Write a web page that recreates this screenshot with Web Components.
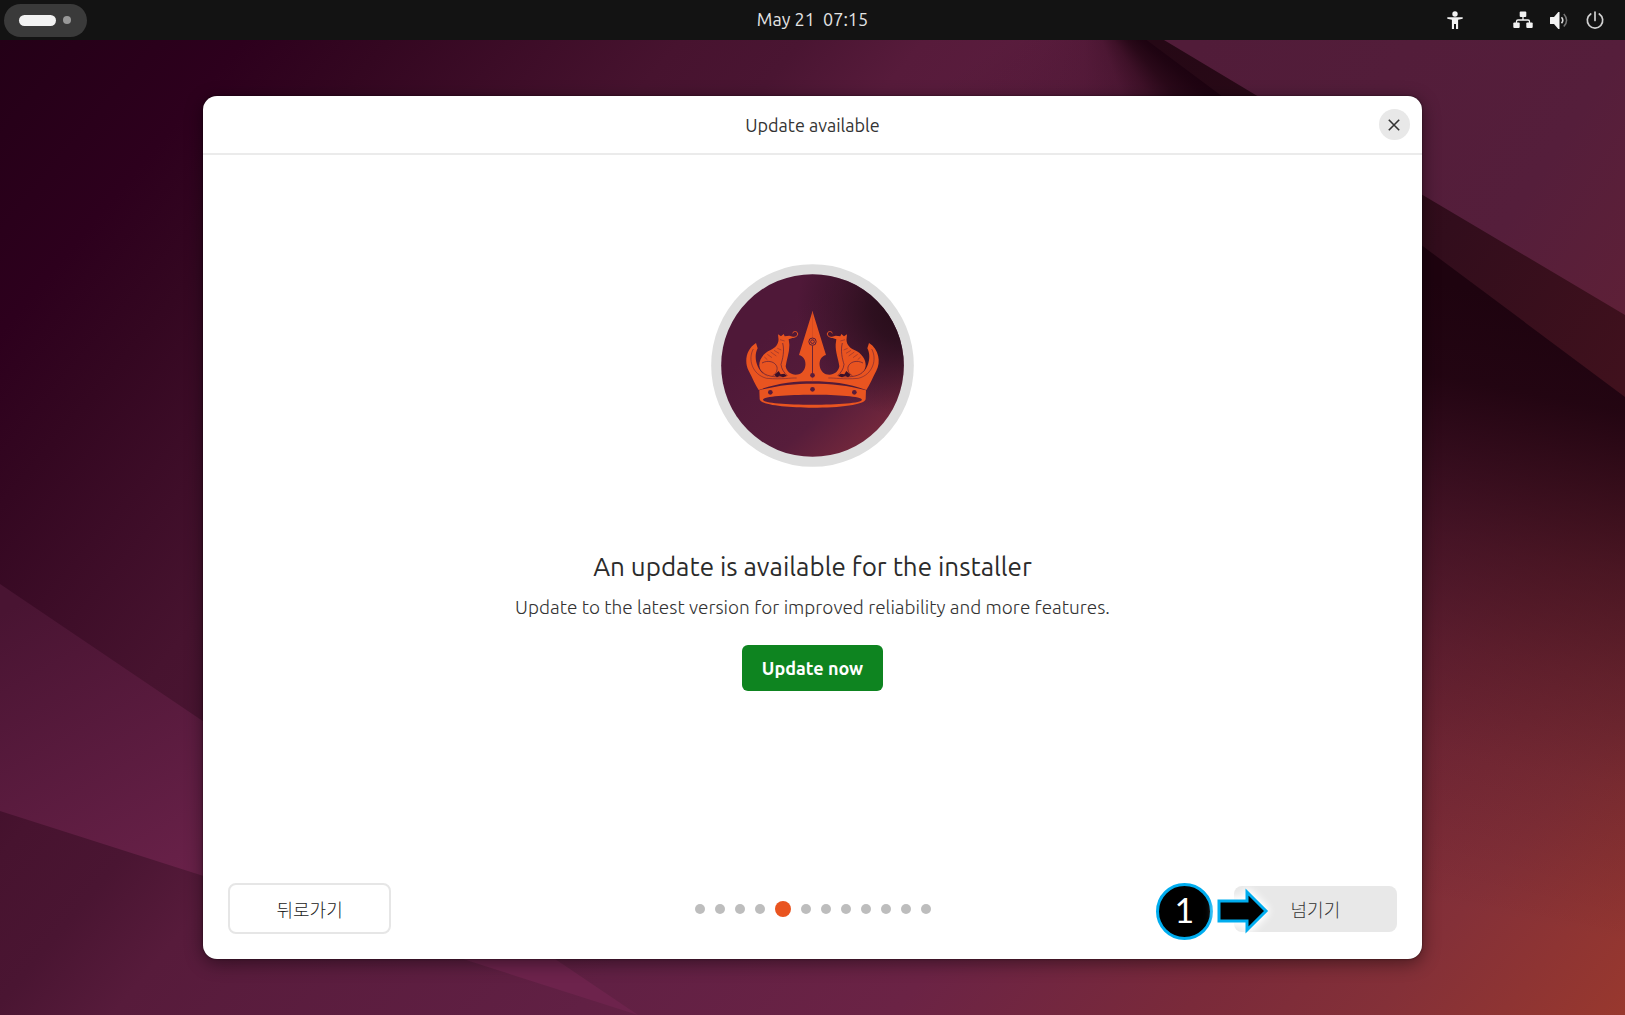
<!DOCTYPE html>
<html lang="ko">
<head>
<meta charset="utf-8">
<meta name="viewport" content="width=device-width, initial-scale=1">
<title>Update available</title>
<style>
  body {
    margin: 0;
    font-family: Ubuntu, "Noto Sans", "Noto Sans CJK KR", sans-serif;
    font-size: 18px;
    color: #333;
  }
</style>
</head>
<body>
<desktop-screen>
  <top-bar slot="bar">May 21 &nbsp;07:15</top-bar>
  <installer-window heading="Update available">
    <installer-logo></installer-logo>
    <update-notice>
      <span slot="title">An update is available for the installer</span>
      <span slot="text">Update to the latest version for improved reliability and more features.</span>
      <span slot="action">Update now</span>
    </update-notice>
    <nav-button slot="back">뒤로가기</nav-button>
    <step-dots slot="steps" count="12" current="5"></step-dots>
    <nav-button slot="next" filled>넘기기</nav-button>
    <step-marker slot="marker">1</step-marker>
  </installer-window>
</desktop-screen>

<script>
// Attach an open shadow root filled with the given HTML
function render(element, html) {
  const template = document.createElement("template");
  template.innerHTML = html;
  element.attachShadow({ mode: "open" });
  element.shadowRoot.appendChild(template.content.cloneNode(true));
}

// The wallpaper, with the bar on top and the window in the middle
class DesktopScreen extends HTMLElement {
  connectedCallback() {
    render(this, /*html*/`
      <style>
        :host {
          display: flex;
          flex-direction: column;
          position: relative;
          min-height: 100vh;
          overflow: hidden;
        }
        .wallpaper {
          position: absolute;
          inset: 0;
          width: 100%;
          height: 100%;
          z-index: -1;
        }
        .fan {
          height: 100%;
          background: conic-gradient(at 1085px -6px,
            transparent 125deg, #1c0210 125deg, #1d0310f5 130deg, #1e0410d0 138deg,
            #20041080 148deg, #20041040 160deg, #20041020 180deg, #20041000 240deg);
        }
        main {
          flex: 1;
          display: flex;
          justify-content: center;
          padding: 56px 0;
        }
        ::slotted(installer-window) { width: 75%; }
      </style>
      <svg class="wallpaper" viewBox="0 0 1625 1015" preserveAspectRatio="xMidYMid slice" aria-hidden="true">
        <defs>
          <linearGradient id="base" gradientUnits="userSpaceOnUse" x1="0" y1="40" x2="1436" y2="1237">
            <stop offset="0" stop-color="#240017"/>
            <stop offset=".1" stop-color="#2d001d"/>
            <stop offset=".16" stop-color="#340721"/>
            <stop offset=".28" stop-color="#47132f"/>
            <stop offset=".33" stop-color="#4a1532"/>
            <stop offset=".38" stop-color="#571b3b"/>
            <stop offset=".57" stop-color="#612044"/>
            <stop offset=".7" stop-color="#6b2345"/>
            <stop offset=".82" stop-color="#7a2a3a"/>
            <stop offset=".9" stop-color="#843038"/>
            <stop offset="1" stop-color="#98382e"/>
          </linearGradient>
          <linearGradient id="wedge" gradientUnits="userSpaceOnUse" x1="60" y1="580" x2="240" y2="900">
            <stop offset="0" stop-color="#491432"/>
            <stop offset="1" stop-color="#6d234c"/>
          </linearGradient>
          <linearGradient id="plane" gradientUnits="userSpaceOnUse" x1="1200" y1="40" x2="1625" y2="320">
            <stop offset="0" stop-color="#511c39"/>
            <stop offset=".7" stop-color="#551e3b"/>
            <stop offset="1" stop-color="#5e2037"/>
          </linearGradient>
          <linearGradient id="band" gradientUnits="userSpaceOnUse" x1="1160" y1="40" x2="1625" y2="380">
            <stop offset="0" stop-color="#250815"/>
            <stop offset=".6" stop-color="#320d1c"/>
            <stop offset="1" stop-color="#40111d"/>
          </linearGradient>
          <linearGradient id="shade" gradientUnits="userSpaceOnUse" x1="1530" y1="300" x2="1410" y2="900">
            <stop offset="0" stop-color="#1e030f"/>
            <stop offset=".15" stop-color="#1e030f" stop-opacity=".94"/>
            <stop offset=".25" stop-color="#1e030f" stop-opacity=".78"/>
            <stop offset=".41" stop-color="#1e030f" stop-opacity=".53"/>
            <stop offset=".58" stop-color="#1e030f" stop-opacity=".32"/>
            <stop offset=".75" stop-color="#1e030f" stop-opacity=".15"/>
            <stop offset="1" stop-color="#1e030f" stop-opacity="0"/>
          </linearGradient>
        </defs>
        <rect width="1625" height="1015" fill="url(#base)"/>
        <polygon points="0,584 638,1015 0,811" fill="url(#wedge)"/>
        <foreignObject width="1325" height="400"><div class="fan"></div></foreignObject>
        <rect x="1325" width="300" height="1015" fill="url(#shade)"/>
        <polygon points="1093,0 1625,397 1625,0" fill="url(#band)"/>
        <polygon points="1097,0 1164,40 1421,194 1625,315 1625,0" fill="url(#plane)"/>
      </svg>
      <slot name="bar"></slot>
      <main><slot></slot></main>`);
  }
}

// Panel with the workspace pill, the clock and the status icons
class TopBar extends HTMLElement {
  connectedCallback() {
    render(this, /*html*/`
      <style>
        :host {
          display: grid;
          grid-template-columns: 1fr auto 1fr;
          align-items: center;
          height: 40px;
          background: #131313;
          color: #e4e4e4;
        }
        button {
          border: 0;
          padding: 0;
          background: none;
          color: inherit;
        }
        .pill {
          display: flex;
          align-items: center;
          gap: 7px;
          width: 83px;
          height: 33px;
          margin-left: 4px;
          padding-left: 15px;
          border-radius: 17px;
          background: #3a3a3a;
        }
        .pill i {
          width: 8px;
          height: 8px;
          border-radius: 50%;
          background: #999;
        }
        .pill i:first-child {
          width: 37px;
          height: 11px;
          border-radius: 6px;
          background: #f2f2f2;
        }
        .icons {
          display: flex;
          justify-content: flex-end;
          gap: 16px;
          padding-right: 20px;
        }
        .icons button:first-child { margin-right: 32px; }
        time { line-height: 24px; padding-bottom: 2px; }
        svg { display: block; width: 20px; height: 20px; }
      </style>
      <button class="pill" aria-label="Activities"><i></i><i></i></button>
      <time><slot></slot></time>
      <div class="icons">
        <button aria-label="Accessibility">
          <svg viewBox="0 0 20 20" fill="#f2f2f2">
            <circle cx="10" cy="4" r="2.7"/>
            <path d="M2.3 7.2h15.4v1.6l-4.6 1V19h-2.1v-5H9v5H6.900V9.800l-4.600-1z"/>
          </svg>
        </button>
        <button aria-label="Network">
          <svg viewBox="0 0 20 20" fill="#f2f2f2">
            <rect x="6.700" y="1.500" width="6.600" height="5.500" rx="1"/>
            <rect x=".3" y="12.500" width="6.400" height="5.500" rx="1"/>
            <rect x="13.300" y="12.500" width="6.400" height="5.500" rx="1"/>
            <path d="M10 6v4M3.500 13v-1.500q0-1.500 1.500-1.500h10q1.500 0 1.500 1.500V13" fill="none" stroke="#f2f2f2" stroke-width="1.300"/>
          </svg>
        </button>
        <button aria-label="Volume">
          <svg viewBox="0 0 20 20">
            <path d="M1.500 7H5l4.300-5h1.200v17H9.300L5 14H1.500Q1 14 1 13.500v-6Q1 7 1.500 7z" fill="#f2f2f2"/>
            <path d="M12.500 7.200q2.600 3 0 6" fill="none" stroke="#ddd" stroke-width="1.600"/>
            <path d="M14.800 4q5.600 6.200 0 12.600" fill="none" stroke="#777" stroke-width="1.500"/>
          </svg>
        </button>
        <button aria-label="Power">
          <svg viewBox="0 0 20 20" fill="none" stroke="#d0d0d0" stroke-width="1.700" stroke-linecap="round">
            <path d="M10 2v8.500M5.700 4a7.700 7.700 0 1 0 8.600 0"/>
          </svg>
        </button>
      </div>`);
  }
}

// White window: header, content and a footer with the navigation
class InstallerWindow extends HTMLElement {
  connectedCallback() {
    render(this, /*html*/`
      <style>
        :host {
          display: flex;
          flex-direction: column;
          border-radius: 14px;
          background: #fff;
          box-shadow: 0 0 2px rgba(0, 0, 0, .6), 0 4px 18px rgba(0, 0, 0, .45);
        }
        header {
          display: grid;
          grid-template-columns: 1fr auto 1fr;
          align-items: center;
          height: 57px;
          padding: 0 12px;
          border-bottom: 2px solid #ebebeb;
        }
        h1 {
          grid-column: 2;
          margin: 0;
          font-size: 18px;
          font-weight: 400;
          line-height: 24px;
        }
        .close {
          justify-self: end;
          display: grid;
          place-items: center;
          width: 31px;
          height: 31px;
          padding: 0;
          border: 0;
          border-radius: 50%;
          background: #e8e8e8;
        }
        section {
          flex: 1;
          display: flex;
          flex-direction: column;
          align-items: center;
          justify-content: center;
          gap: 84px;
          padding-bottom: 84px;
        }
        footer {
          position: relative;
          display: grid;
          grid-template-columns: 1fr auto 1fr;
          align-items: center;
          padding: 0 25px 25px;
        }
        .next { justify-self: end; position: relative; }
        .marker {
          position: absolute;
          right: 128px;
          top: -3px;
        }
      </style>
      <header>
        <h1></h1>
        <button class="close" aria-label="Close">
          <svg width="12" height="12" viewBox="0 0 12 12" stroke="#333" stroke-width="1.600">
            <path d="M.8.8l10.400 10.400M11.200.8L.8 11.200"/>
          </svg>
        </button>
      </header>
      <section><slot></slot></section>
      <footer>
        <slot name="back"></slot>
        <slot name="steps"></slot>
        <div class="next">
          <slot name="next"></slot>
          <div class="marker"><slot name="marker"></slot></div>
        </div>
      </footer>`);
    this.shadowRoot.querySelector("h1").textContent = this.getAttribute("heading");
  }
}

// Round badge with the crown
class InstallerLogo extends HTMLElement {
  connectedCallback() {
    render(this, /*html*/`
      <style>
        :host { display: block; }
        svg { display: block; width: 203px; height: 203px; }
      </style>
      <svg viewBox="33 25 609 609" role="img" aria-label="Crown">
        <defs>
          <radialGradient id="dark" gradientUnits="userSpaceOnUse" cx="610" cy="160" r="320">
            <stop offset="0" stop-color="#260c18"/>
            <stop offset=".3" stop-color="#2c0f1e" stop-opacity=".95"/>
            <stop offset=".6" stop-color="#2c0f1e" stop-opacity=".5"/>
            <stop offset="1" stop-color="#2c0f1e" stop-opacity="0"/>
          </radialGradient>
          <linearGradient id="disc" gradientUnits="userSpaceOnUse" x1="250" y1="200" x2="560" y2="560">
            <stop offset="0" stop-color="#4f1838"/>
            <stop offset=".6" stop-color="#571d3b"/>
            <stop offset="1" stop-color="#7a2a3c"/>
          </linearGradient>
        </defs>
        <circle cx="337.500" cy="329.500" r="304" fill="#dedede"/>
        <circle cx="337.500" cy="329.500" r="274" fill="url(#disc)"/>
        <circle cx="337.500" cy="329.500" r="274" fill="url(#dark)"/>
        <g id="half">
          <path fill="#e95420" d="M168 262C138 280 132 320 146 345C158 368 166 388 176 403
            C230 383 285 377 338 377V165L297 298C311 302 318 314 316 330C314 347 301 357 287 357
            C272 357 260 348 257 332C260 310 269 290 268 266L266 251L284 245L268 240L254 242L251 235L243 242L234 236
            L235 246C238 262 228 276 212 283C190 292 177 312 178 330C180 345 190 357 206 363
            C172 352 158 305 173 278Z"/>
          <path fill="none" stroke="#e95420" stroke-width="3" d="M268 245C282 247 293 243 293 235C293 226 280 225 278 233"/>
          <g fill="none" stroke="#571c3b" stroke-width="2">
            <path d="M160 280C143 310 156 357 200 368C250 372 270 366 290 367" stroke-width="1.500"/>
            <path d="M186 322C204 312 226 318 231 334C233 347 226 356 218 360M183 345C195 362 222 365 250 363"/>
            <path d="M248 262C254 286 248 310 243 326C244 340 253 352 262 360"/>
            <path d="M232 278l12 5M222 284l15 9M212 289l17 12M202 296l14 10M193 304l9 8M240 252l14 4" stroke-width="1.200"/>
          </g>
          <path fill="#3b1028" d="M223 358l13-12 6 10 11-2 8 7-12 4-10-5-8 5z"/>
        </g>
        <path fill="#e95420" fill-rule="evenodd" d="M178 404C230 389 285 384 338 384S446 389 498 404L497 430
          C497 465 179 465 179 430ZM189 432C189 412 486 412 486 432C486 452 189 452 189 432Z"/>
        <use href="#half" transform="translate(675 0) scale(-1 1)"/>
        <circle cx="211" cy="410" r="7" fill="#571c3b"/>
        <circle cx="463" cy="410" r="7" fill="#571c3b"/>
        <circle cx="337.500" cy="401" r="7" fill="#571c3b"/>
        <circle cx="337.500" cy="359" r="7" fill="#571c3b"/>
        <path d="M337.500 270v84" stroke="#571c3b" stroke-width="2.500"/>
        <circle cx="337.500" cy="258" r="11" fill="none" stroke="#571c3b" stroke-width="3"/>
        <circle cx="337.500" cy="258" r="5.500" fill="none" stroke="#571c3b" stroke-width="3"/>
      </svg>`);
  }
}

// Title, text and the green action button
class UpdateNotice extends HTMLElement {
  connectedCallback() {
    render(this, /*html*/`
      <style>
        :host {
          display: flex;
          flex-direction: column;
          align-items: center;
          text-align: center;
        }
        h2 {
          margin: 0 0 12px;
          font-size: 26px;
          font-weight: 400;
          line-height: 32px;
          color: #2b2b2b;
        }
        p {
          margin: 0 0 26px;
          font-size: 19px;
          font-weight: 300;
          line-height: 24px;
        }
        button {
          height: 46px;
          padding: 0 20px;
          border: 0;
          border-radius: 6px;
          background: #0e8420;
          color: #fff;
          font: inherit;
          font-weight: 600;
        }
      </style>
      <h2><slot name="title"></slot></h2>
      <p><slot name="text"></slot></p>
      <button><slot name="action"></slot></button>`);
  }
}

// Footer button, outlined or filled
class NavButton extends HTMLElement {
  connectedCallback() {
    render(this, /*html*/`
      <style>
        :host { display: block; }
        button {
          display: block;
          width: 163px;
          height: 51px;
          border: 2px solid #e6e6e6;
          border-radius: 8px;
          background: #fff;
          color: #222;
          font: inherit;
          font-weight: 300;
        }
        :host([filled]) button {
          height: 46px;
          border: 0;
          background: #e8e8e8;
          color: #333;
        }
      </style>
      <button><slot></slot></button>`);
  }
}

// Row of dots, the current page larger and orange
class StepDots extends HTMLElement {
  connectedCallback() {
    render(this, /*html*/`
      <style>
        :host {
          display: flex;
          align-items: center;
          gap: 10px;
        }
        i {
          width: 10px;
          height: 10px;
          border-radius: 50%;
          background: #bdbdbd;
        }
        .current {
          width: 16px;
          height: 16px;
          background: #e95420;
        }
      </style>`);
    const count = Number(this.getAttribute("count"));
    const current = Number(this.getAttribute("current"));
    for (let i = 1; i <= count; i++) {
      const dot = document.createElement("i");
      dot.classList.toggle("current", i === current);
      this.shadowRoot.appendChild(dot);
    }
  }
}

// Numbered badge with an arrow that points at a control
class StepMarker extends HTMLElement {
  connectedCallback() {
    render(this, /*html*/`
      <style>
        :host {
          display: flex;
          align-items: center;
          gap: 4px;
        }
        span {
          box-sizing: border-box;
          width: 57px;
          height: 57px;
          border: 3px solid #00adef;
          border-radius: 50%;
          background: #000;
          color: #fff;
          font-family: Lato, sans-serif;
          font-size: 34px;
          line-height: 48px;
          text-align: center;
        }
        svg {
          display: block;
          overflow: visible;
          filter: drop-shadow(0 0 4px #fff) drop-shadow(0 0 3px #fff);
        }
      </style>
      <span><slot></slot></span>
      <svg width="52" height="46" viewBox="0 0 52 46" fill="#000" stroke="#00adef" stroke-width="3">
        <path d="M2 13h28V4l19 19-19 19v-9H2z"/>
      </svg>`);
  }
}

customElements.define("desktop-screen", DesktopScreen);
customElements.define("top-bar", TopBar);
customElements.define("installer-window", InstallerWindow);
customElements.define("installer-logo", InstallerLogo);
customElements.define("update-notice", UpdateNotice);
customElements.define("nav-button", NavButton);
customElements.define("step-dots", StepDots);
customElements.define("step-marker", StepMarker);
</script>
</body>
</html>
